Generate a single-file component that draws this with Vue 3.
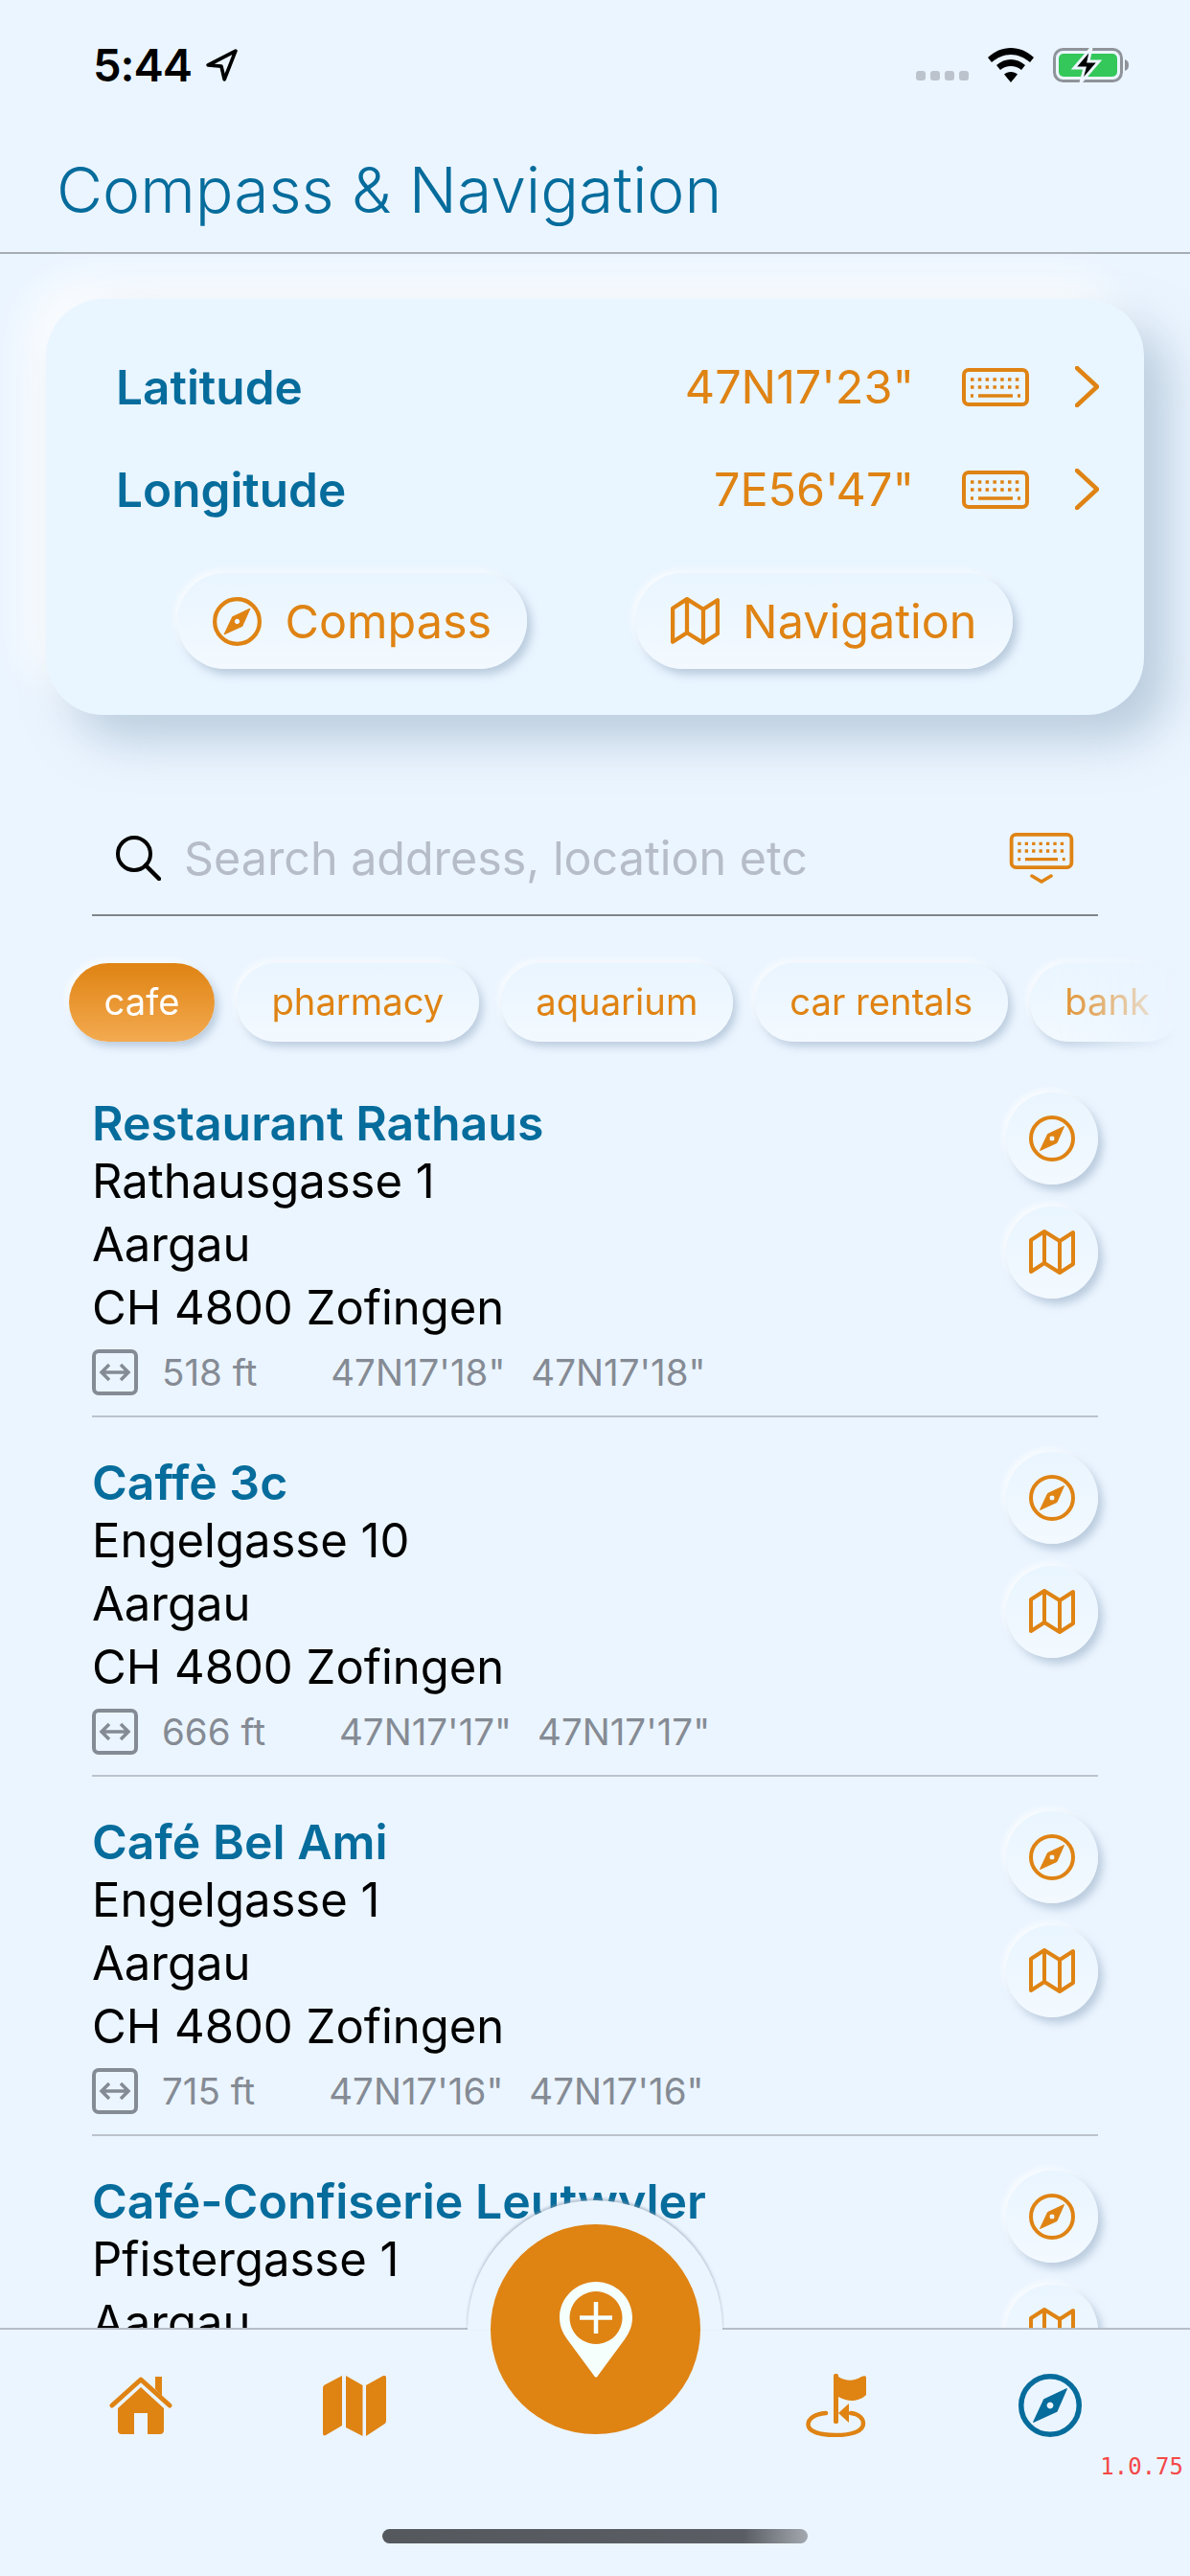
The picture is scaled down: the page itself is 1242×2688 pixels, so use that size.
<script setup>
const coords = [
  { label: 'Latitude', value: `47N17'23"` },
  { label: 'Longitude', value: `7E56'47"` }
]

const chips = ['cafe', 'pharmacy', 'aquarium', 'car rentals', 'bank']

const places = [
  { name: 'Restaurant Rathaus', street: 'Rathausgasse 1', dist: '518 ft', lat: `47N17'18"`, lon: `47N17'18"` },
  { name: 'Caffè 3c', street: 'Engelgasse 10', dist: '666 ft', lat: `47N17'17"`, lon: `47N17'17"` },
  { name: 'Café Bel Ami', street: 'Engelgasse 1', dist: '715 ft', lat: `47N17'16"`, lon: `47N17'16"` },
  { name: 'Café-Confiserie Leutwyler', street: 'Pfistergasse 1', dist: '740 ft', lat: `47N17'15"`, lon: `47N17'15"` }
]
</script>

<template>
  <div class="app">
    <svg class="defs" width="0" height="0">
      <symbol id="compass" viewBox="0 0 48 48">
        <circle cx="24" cy="24" r="22" fill="none" stroke="currentColor" stroke-width="4" />
        <path fill="currentColor" fill-rule="evenodd" d="M36.5 11.5 29 28.500 11.500 36.500 19.500 19.500ZM24 21a3 3 0 1 0 .01 0Z" stroke="currentColor" stroke-width="1" stroke-linejoin="round" />
      </symbol>
      <symbol id="map" viewBox="0 0 48 48">
        <path fill="none" stroke="currentColor" stroke-width="4" stroke-linejoin="round" d="M2 11 16 2 32 12 46 3V36L32 45 16 35 2 44ZM16 2V35M32 12V45" />
      </symbol>
      <symbol id="keyboard" viewBox="0 0 70 40">
        <rect x="2" y="2" width="66" height="36" rx="5" fill="none" stroke="currentColor" stroke-width="4" />
        <path fill="none" stroke="currentColor" stroke-width="3.500" stroke-dasharray="3.500 4.300" d="M9 12H62M9 20H62" />
        <path fill="none" stroke="currentColor" stroke-width="3.500" d="M9 29H12M17 29H53M58 29H61" />
      </symbol>
    </svg>

    <div class="status">
      <div class="status-left">
        <span class="time">5:44</span>
        <svg class="arrow" viewBox="0 0 32 32" width="34" height="34">
          <path fill="none" stroke="#000" stroke-width="3.500" stroke-linejoin="round" d="M30 2 3 16 16 17 19 30Z" />
        </svg>
      </div>
      <div class="status-right">
        <div class="signal"><i></i><i></i><i></i><i></i></div>
        <svg viewBox="0 0 48 36" width="48" height="36">
          <path fill="#000" d="M24 0C33 0 41 3.500 48 10L44 15C38 10 31.500 7 24 7S10 10 4 15L0 10C7 3.500 15 0 24 0Z" />
          <path fill="#000" d="M24 12C29.500 12 34.500 14 39 18L35 23C32 20.500 28 19 24 19S16 20.500 13 23L9 18C13.500 14 18.500 12 24 12Z" />
          <path fill="#000" d="M24 25C27 25 29 26 31 27.500L24 36 17 27.500C19 26 21 25 24 25Z" />
        </svg>
        <svg viewBox="0 0 80 36" width="80" height="36">
          <rect x="1.500" y="1.500" width="70" height="33" rx="9" fill="none" stroke="#8f949a" stroke-width="3" />
          <rect x="6" y="6" width="61" height="24" rx="5" fill="#34c759" />
          <path d="M75 12c3 1 4 3 4 6s-1 5-4 6Z" fill="#8f949a" />
          <path fill="#000" stroke="#edf5ff" stroke-width="3" d="M40 0 22 21H33L29 36 48 14H37Z" />
        </svg>
      </div>
    </div>

    <header class="header">
      <h1>Compass &amp; Navigation</h1>
    </header>

    <section class="card">
      <div v-for="c in coords" :key="c.label" class="coord">
        <span class="coord-label">{{ c.label }}</span>
        <span class="coord-value">{{ c.value }}</span>
        <svg class="kb"><use href="#keyboard" /></svg>
        <svg class="chev" viewBox="0 0 25 43">
          <path fill="none" stroke="currentColor" stroke-width="4.500" stroke-linecap="round" stroke-linejoin="round" d="M2 2 23 21.500 2 41" />
        </svg>
      </div>
      <div class="card-actions">
        <button class="pill">
          <svg class="pill-icon"><use href="#compass" /></svg>
          Compass
        </button>
        <button class="pill">
          <svg class="pill-icon"><use href="#map" /></svg>
          Navigation
        </button>
      </div>
    </section>

    <div class="search">
      <svg class="search-icon" viewBox="0 0 48 48">
        <circle cx="20" cy="20" r="17" fill="none" stroke="#000" stroke-width="4" />
        <path d="M32 32 46 46" stroke="#000" stroke-width="4.500" stroke-linecap="round" />
      </svg>
      <span class="placeholder">Search address, location etc</span>
      <div class="search-kb">
        <svg class="search-kb-icon"><use href="#keyboard" /></svg>
        <svg viewBox="0 0 24 10" width="24" height="10">
          <path d="M2 2 12 8 22 2" fill="none" stroke="currentColor" stroke-width="3.500" stroke-linecap="round" />
        </svg>
      </div>
    </div>

    <div class="chips">
      <span v-for="(chip, i) in chips" :key="chip" class="chip" :class="{ active: i === 0 }">{{ chip }}</span>
    </div>

    <div class="list">
      <article v-for="p in places" :key="p.name" class="place">
        <div class="place-body">
          <div class="place-name">{{ p.name }}</div>
          <div class="place-line">{{ p.street }}</div>
          <div class="place-line">Aargau</div>
          <div class="place-line">CH 4800 Zofingen</div>
          <div class="place-meta">
            <svg class="dist-icon" viewBox="0 0 48 48">
              <rect x="2" y="2" width="44" height="44" rx="5" fill="none" stroke="#858b94" stroke-width="4" />
              <path d="M11 24H37M18 16 10 24 18 32M30 16 38 24 30 32" fill="none" stroke="#858b94" stroke-width="3.500" />
            </svg>
            <span class="dist">{{ p.dist }}</span>
            <span>{{ p.lat }}</span>
            <span>{{ p.lon }}</span>
          </div>
        </div>
        <div class="place-actions">
          <button class="round"><svg class="round-icon"><use href="#compass" /></svg></button>
          <button class="round"><svg class="round-icon"><use href="#map" /></svg></button>
        </div>
      </article>
    </div>

    <nav class="tabbar">
      <div class="notch"></div>
      <button class="fab">
        <svg viewBox="0 0 76 100" width="76" height="100">
          <path fill="#f5fffc" fill-rule="evenodd" d="M38 0C59 0 76 17 76 37 76 46 73 53 68 60L40 98C39 100 37 100 36 98L8 60C3 53 0 46 0 37 0 17 17 0 38 0ZM38 10A27.500 27.500 0 1 0 38.010 10Z" />
          <path d="M38 21V54M21 37.500H55" stroke="#f5fffc" stroke-width="4.500" />
        </svg>
      </button>
      <div class="tabs">
        <svg class="tab" viewBox="0 0 66 61" width="66" height="61">
          <path fill="#df8313" d="M33 11 57 33V56C57 58.500 55.500 60 53 60H40V38H26V60H13C10.500 60 9 58.500 9 56V33Z" />
          <path fill="none" stroke="#df8313" stroke-width="5" stroke-linecap="round" stroke-linejoin="round" d="M3 30 33 3 63 30" />
          <path fill="#df8313" d="M48 0H55V20L48 13Z" />
        </svg>
        <svg class="tab" viewBox="0 0 66 63" width="66" height="63">
          <path fill="#df8313" d="M20 0V52L3 62C1 63 0 62 0 60V13C0 11 1 10 2 9.500ZM24 0 41.500 10V63L24 54ZM66 2V47C66 49 65 50 64 50.500L45 63V10L63 0C65 -.5 66 .5 66 2Z" />
        </svg>
        <span></span>
        <svg class="tab" viewBox="0 0 63 66" width="63" height="66">
          <path fill="#df8313" d="M29 2C29 .5 30 0 31.500 0S34 .5 34 2V50C34 51.500 33 52 31.500 52S29 51.500 29 50ZM34 3C42 8 50 8 58 3C61 2 63 2 63 4V22C57 28 46 31 34 24Z" />
          <path fill="none" stroke="#df8313" stroke-width="4.500" stroke-linecap="round" d="M21 41C9 42 2.500 47 2.500 53 2.500 60 14 64 31 64S60 60 60 52C60 46 55 42 47 41" />
          <path fill="#df8313" d="M34 41 45 31V51Z" />
        </svg>
        <svg class="tab tab-active"><use href="#compass" /></svg>
      </div>
      <div class="version">1.0.75</div>
      <div class="home-indicator"></div>
    </nav>
  </div>
</template>

<style scoped>
.app {
  position: relative;
  display: flex;
  flex-direction: column;
  width: 1242px;
  height: 2688px;
  overflow: hidden;
  background: #ebf5ff;
  font-family: Inter, "Liberation Sans", sans-serif;
  color: #000;
}

.defs {
  position: absolute;
}

button {
  font-family: inherit;
  border: none;
  cursor: pointer;
}

.status {
  flex: none;
  display: flex;
  align-items: center;
  justify-content: space-between;
  height: 132px;
  box-sizing: border-box;
  padding: 3px 63px 0 97px;
}

.status-left {
  display: flex;
  align-items: center;
  gap: 14px;
}

.time {
  font-size: 47px;
  font-weight: 600;
  line-height: 1;
  letter-spacing: -1px;
}

.status-right {
  display: flex;
  align-items: center;
  gap: 20px;
}

.signal {
  display: flex;
  gap: 5px;
  align-self: flex-end;
  margin-bottom: 2px;
}

.signal i {
  width: 10px;
  height: 10px;
  border-radius: 3px;
  background: #bcc3cd;
}

.header {
  flex: none;
  height: 133px;
  padding-left: 59px;
  border-bottom: 2px solid #a7adb5;
  box-sizing: border-box;
}

h1 {
  margin: 0;
  font-size: 66px;
  font-weight: 300;
  line-height: 132px;
  color: #066c9c;
}

.card {
  flex: none;
  margin: 47px 48px 0;
  padding: 38px 47px 48px 73px;
  border-radius: 60px;
  background: #e9f5ff;
  box-shadow: 26px 26px 48px rgba(140, 165, 190, 0.5), -20px -20px 40px rgba(255, 255, 255, 0.85);
}

.coord {
  display: flex;
  align-items: center;
  height: 107px;
  color: #df8313;
}

.coord-label {
  flex: 1;
  font-size: 49.500px;
  font-weight: 600;
  color: #066c9c;
}

.coord-value {
  font-size: 48.500px;
  font-weight: 400;
}

.kb {
  width: 70px;
  height: 40px;
  margin-left: 50px;
}

.chev {
  width: 25px;
  height: 43px;
  margin-left: 48px;
}

.card-actions {
  display: flex;
  justify-content: center;
  gap: 113px;
  margin-top: 34px;
  padding-right: 26px;
}

.pill {
  display: flex;
  align-items: center;
  gap: 24px;
  height: 100px;
  padding: 0 37px;
  border-radius: 50px;
  font-size: 48.500px;
  font-weight: 400;
  color: #df8313;
  background: linear-gradient(#e9f5ff, #f3f9ff);
  box-shadow: 5px 6px 9px rgba(150, 172, 195, 0.55), -3px -3px 6px rgba(255, 255, 255, 0.8);
}

.pill-icon {
  width: 51px;
  height: 51px;
}

.search {
  flex: none;
  display: flex;
  align-items: center;
  height: 100px;
  box-sizing: border-box;
  margin: 110px 96px 0;
  padding: 0 24px 20px;
  border-bottom: 2px solid #7f8589;
}

.search-icon {
  width: 48px;
  height: 48px;
}

.placeholder {
  flex: 1;
  margin-left: 24px;
  font-size: 48.400px;
  font-weight: 400;
  color: #b6bdc8;
}

.search-kb {
  display: flex;
  flex-direction: column;
  align-items: center;
  gap: 5px;
  color: #df8313;
}

.search-kb-icon {
  width: 70px;
  height: 38px;
}

.chips {
  flex: none;
  display: flex;
  gap: 23px;
  margin-top: 29px;
  padding: 20px 0 20px 72px;
  overflow: hidden;
  -webkit-mask-image: linear-gradient(to right, #000 88%, transparent 99%);
  mask-image: linear-gradient(to right, #000 88%, transparent 99%);
}

.chip {
  flex: none;
  height: 82px;
  padding: 0 36.500px;
  border-radius: 41px;
  font-size: 38.200px;
  font-weight: 400;
  line-height: 80px;
  color: #df8313;
  background: linear-gradient(#e9f5ff, #f3f9ff);
  box-shadow: 4px 5px 8px rgba(150, 172, 195, 0.55), -3px -3px 6px rgba(255, 255, 255, 0.8);
}

.chip.active {
  color: #fff;
  background: linear-gradient(#df8313, #f3aa50);
}

.list {
  flex: 1;
  min-height: 0;
  margin-top: -3px;
  padding: 0 96px;
  overflow: hidden;
}

.place {
  display: flex;
  justify-content: space-between;
  height: 375px;
  box-sizing: border-box;
  border-bottom: 2px solid #bcc3cd;
}

.place:last-child {
  border-bottom: none;
}

.place-name {
  margin-top: 40px;
  font-size: 50px;
  font-weight: 600;
  line-height: 56px;
  color: #066c9c;
}

.place-line {
  font-size: 49px;
  font-weight: 400;
  line-height: 66px;
}

.place-meta {
  display: flex;
  align-items: center;
  gap: 27px;
  height: 62px;
  margin-top: 3px;
  font-size: 38.500px;
  font-weight: 400;
  color: #858b94;
}

.dist-icon {
  width: 48px;
  height: 48px;
  margin-right: -2px;
}

.dist {
  margin-right: 50px;
}

.place-actions {
  display: flex;
  flex-direction: column;
  gap: 23px;
  padding-top: 36px;
}

.round {
  display: flex;
  align-items: center;
  justify-content: center;
  width: 96px;
  height: 96px;
  padding: 0;
  border-radius: 50%;
  color: #df8313;
  background: linear-gradient(#e9f5ff, #f3f9ff);
  box-shadow: 5px 6px 9px rgba(150, 172, 195, 0.55), -3px -3px 6px rgba(255, 255, 255, 0.8);
}

.round-icon {
  width: 48px;
  height: 48px;
}

.tabbar {
  position: relative;
  flex: none;
  height: 259px;
  box-sizing: border-box;
  padding-top: 46px;
  background: #ebf5ff;
  border-top: 2px solid #b4bdc8;
}

.notch {
  position: absolute;
  left: 488px;
  top: -135px;
  width: 266px;
  height: 135px;
  border-radius: 133px 133px 0 0;
  background: #ebf5ff;
  box-shadow: 0 -2px 3px rgba(130, 145, 165, 0.55);
}

.fab {
  position: absolute;
  left: 512px;
  top: -110px;
  display: flex;
  align-items: flex-start;
  justify-content: center;
  width: 219px;
  height: 219px;
  padding: 60px 0 0;
  border-radius: 50%;
  background: #df8313;
}

.tabs {
  display: grid;
  grid-template-columns: 223px 223px 280px 223px 223px;
  align-items: center;
  justify-items: center;
  height: 66px;
  padding-left: 35px;
}

.tab-active {
  width: 66px;
  height: 66px;
  color: #066c9c;
}

.version {
  margin-top: 18px;
  padding-right: 7px;
  text-align: right;
  font-family: "DejaVu Sans Mono", "Liberation Mono", monospace;
  font-size: 24px;
  line-height: 26px;
  color: #f44848;
}

.home-indicator {
  width: 444px;
  height: 15px;
  margin: 52px auto 0;
  border-radius: 8px;
  background: linear-gradient(90deg, #55595e 0, #5a5e64 85%, #a3a8af 100%);
}
</style>
